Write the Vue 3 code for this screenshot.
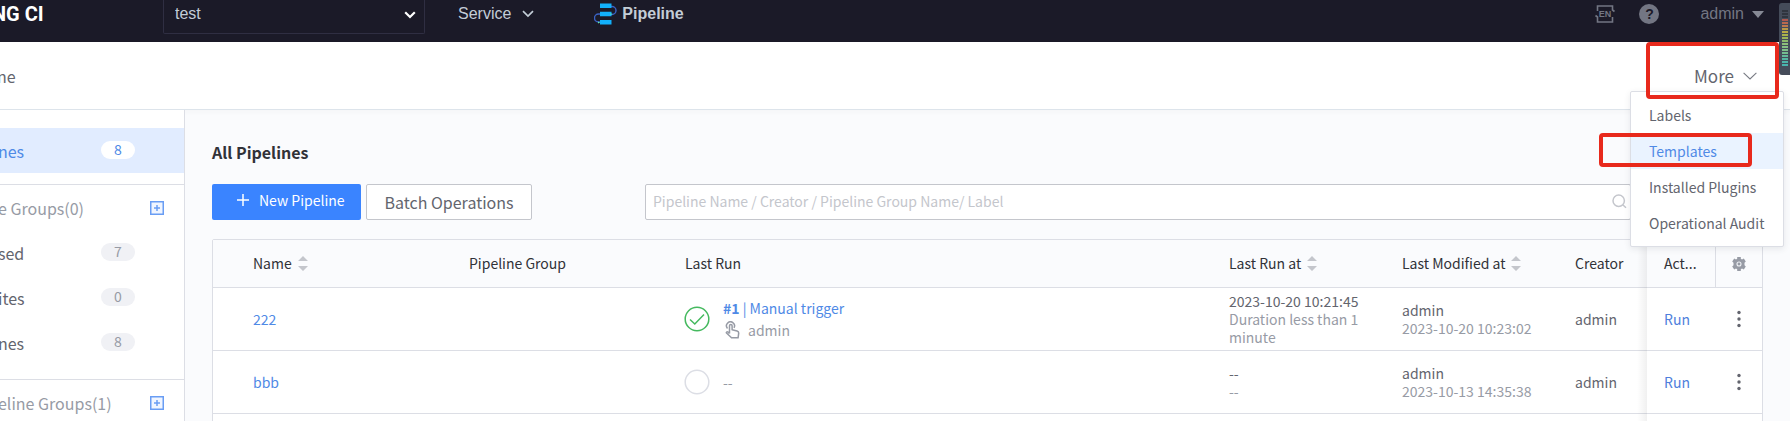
<script setup>
import { ref } from 'vue'

const project = ref('test')
const keyword = ref('')

const menu = ['Labels', 'Templates', 'Installed Plugins', 'Operational Audit']
const activeMenu = 'Templates'

const groups = [
  {
    title: 'e Groups(0)',
    items: [
      { label: 'sed', count: 7 },
      { label: 'ites', count: 0 },
      { label: 'nes', count: 8 },
    ],
  },
  { title: 'eline Groups(1)', items: [] },
]

const columns = [
  { key: 'name', label: 'Name', sortable: true },
  { key: 'group', label: 'Pipeline Group' },
  { key: 'run', label: 'Last Run' },
  { key: 'runAt', label: 'Last Run at', sortable: true },
  { key: 'modified', label: 'Last Modified at', sortable: true },
  { key: 'creator', label: 'Creator' },
]

const rows = [
  {
    name: '222', done: true, build: '#1', trigger: 'Manual trigger', runner: 'admin',
    runAt: '2023-10-20 10:21:45', duration: 'Duration less than 1 minute',
    editor: 'admin', editedAt: '2023-10-20 10:23:02', creator: 'admin',
  },
  {
    name: 'bbb', done: false, runAt: '--', duration: '--',
    editor: 'admin', editedAt: '2023-10-13 14:35:38', creator: 'admin',
  },
]

const levels = [
  '#30353f', '#30353f', '#30353f', '#b0584e', '#b9694f', '#bd7a4d', '#b99a48', '#b8ab45',
  '#a9b34a', '#9bb758', '#8cba6b', '#8cc07a', '#86c084', '#7fc08a', '#74bd90', '#63b99a',
  '#55b7a3', '#4db5a9', '#48b4ad',
]
</script>

<template>
  <div class="page">
    <header class="topbar">
      <span class="brand">NG CI</span>
      <div class="project">
        <select v-model="project" aria-label="Project">
          <option>test</option>
        </select>
        <svg width="12" height="8" viewBox="0 0 12 8"><path d="M1.2 1.2 6 6l4.800-4.800" fill="none" stroke="#fff" stroke-width="2.200" /></svg>
      </div>
      <button class="service" type="button">
        Service
        <svg width="12" height="8" viewBox="0 0 12 8"><path d="M1 1.200 6 6l5-4.800" fill="none" stroke="#c3cdd7" stroke-width="1.700" /></svg>
      </button>
      <a class="product" href="#">
        <svg width="23" height="22" viewBox="0 0 23 22">
          <path d="M16 3.500h2a3.700 3.700 0 0 1 0 8h-1M6 11H4.500a3.900 3.900 0 0 0 0 8H6" fill="none" stroke="#3a62c4" stroke-width="1.400" />
          <path d="M6 .5h11.500v4.500H6zM6 8.800h11.500v4.500H6zM6 17h11.500v4.500H6z" fill="#12b0fb" />
          <path d="M16.500 10.200l2 .9-2 1zM4 18.500l2 .9-2 1z" fill="#5df0a8" />
        </svg>
        Pipeline
      </a>
      <div class="tools">
        <button class="tool" type="button" aria-label="Language">
          <svg width="20" height="18" viewBox="0 0 20 18">
            <path d="M2.500 6V1h15v4l2 1.500M17.500 12v5h-15v-5L.5 10.500" fill="none" stroke="#737683" stroke-width="1.600" />
            <text x="10" y="12" text-anchor="middle" class="lang">EN</text>
          </svg>
        </button>
        <button class="help" type="button">?</button>
        <button class="user" type="button">
          admin
          <svg width="12" height="7" viewBox="0 0 12 7"><path d="M0 0h12L6 7z" fill="#868995" /></svg>
        </button>
      </div>
    </header>

    <nav class="subbar">
      <a class="crumb" href="#">ne</a>
      <div class="more">
        <button class="more-button" type="button">
          More
          <svg width="14" height="8" viewBox="0 0 14 8"><path d="M.6.8 7 7 13.400.8" fill="none" stroke="#777a83" stroke-width="1.100" /></svg>
        </button>
        <ul class="menu">
          <li v-for="item in menu" :key="item">
            <a href="#" :class="{ active: item === activeMenu }">{{ item }}</a>
          </li>
        </ul>
        <span class="mark mark-more"></span>
        <span class="mark mark-templates"></span>
      </div>
    </nav>

    <div class="body">
      <aside class="sidebar">
        <a class="entry active" href="#"><span class="label">nes</span><span class="count">8</span></a>
        <section v-for="group in groups" :key="group.title" class="group">
          <h3>
            <span class="label">{{ group.title }}</span>
            <button type="button" aria-label="Add group">
              <svg width="14" height="14" viewBox="0 0 14 14"><path d="M.75.75h12.500v12.500H.75zM7 4v6M4 7h6" fill="#f0f5ff" stroke="#699df4" stroke-width="1.500" /></svg>
            </button>
          </h3>
          <a v-for="item in group.items" :key="item.label" class="entry" href="#">
            <span class="label">{{ item.label }}</span><span class="count">{{ item.count }}</span>
          </a>
        </section>
      </aside>

      <main class="main">
        <h1>All Pipelines</h1>
        <div class="actions">
          <button class="primary" type="button">
            <svg width="12" height="12" viewBox="0 0 12 12"><path d="M6 0v12M0 6h12" stroke="#fff" stroke-width="1.500" /></svg>
            New Pipeline
          </button>
          <button class="plain" type="button">Batch Operations</button>
          <div class="search">
            <input v-model="keyword" type="text" aria-label="Search pipelines" placeholder="Pipeline Name / Creator / Pipeline Group Name/ Label">
            <svg width="15" height="15" viewBox="0 0 15 15"><path d="M11 11l3 2.800M6.700 1a5.700 5.700 0 1 1 0 11.400A5.700 5.700 0 0 1 6.700 1z" fill="none" stroke="#c4c6cc" stroke-width="1.500" /></svg>
          </div>
        </div>

        <div class="table-wrap">
          <table>
            <colgroup>
              <col class="c-pad"><col class="c-wide"><col class="c-wide"><col><col class="c-date"><col class="c-date"><col class="c-creator"><col class="c-act"><col class="c-set">
            </colgroup>
            <thead>
              <tr>
                <th></th>
                <th v-for="col in columns" :key="col.key">
                  <span class="head">{{ col.label }}
                    <svg v-if="col.sortable" width="10" height="16" viewBox="0 0 10 16"><path d="M0 6h10L5 1zM0 11h10l-5 5z" fill="#c4c6cc" /></svg>
                  </span>
                </th>
                <th class="fixed">Act...</th>
                <th class="setting">
                  <button type="button" aria-label="Table settings">
                    <svg width="14" height="14" viewBox="0 0 14 14">
                      <path d="M5.200 0h3.600v1.700l1.200.7 1.800-.8 2 3-1.300 1.100v2.600l1.300 1.100-2 3-1.800-.8-1.200.7V14H5.200v-1.700L4 11.600l-1.800.8-2-3 1.300-1.100V5.700L.2 4.600l2-3 1.800.8 1.200-.7z" fill="#979ba5" />
                      <circle cx="7" cy="7" r="2" fill="#979ba5" stroke="#eef0f4" stroke-width="1.100" />
                    </svg>
                  </button>
                </th>
              </tr>
            </thead>
            <tbody>
              <tr v-for="row in rows" :key="row.name">
                <td></td>
                <td><a href="#">{{ row.name }}</a></td>
                <td></td>
                <td>
                  <div class="run">
                    <svg width="26" height="26" viewBox="0 0 26 26">
                      <circle cx="13" cy="13" r="11.800" fill="none" :stroke="row.done ? '#45b95f' : '#dcdee5'" stroke-width="1.500" />
                      <path v-if="row.done" d="M6 13.500l4.800 4.500L20 8.500" fill="none" stroke="#45b95f" stroke-width="1.500" />
                    </svg>
                    <div v-if="row.done" class="run-info">
                      <a href="#"><b>{{ row.build }}</b> | {{ row.trigger }}</a>
                      <span class="runner">
                        <svg width="15" height="18" viewBox="0 0 15 18"><path d="M2.500 7.500A4 4 0 1 1 9 6.800M4.500 12.500V4.800a1.300 1.300 0 0 1 2.600 0v4l5 1.200c1.200.3 1.700 1 1.600 2.200l-.6 4.600H6.500L1.500 12c-.6-.7.500-1.700 1.500-1l1.500 1.500" fill="none" stroke="#979ba5" stroke-width="1.500" stroke-linejoin="round" /></svg>
                        {{ row.runner }}
                      </span>
                    </div>
                    <span v-else class="muted">--</span>
                  </div>
                </td>
                <td>{{ row.runAt }}<p>{{ row.duration }}</p></td>
                <td>{{ row.editor }}<p>{{ row.editedAt }}</p></td>
                <td>{{ row.creator }}</td>
                <td class="fixed"><a class="go" href="#">Run</a></td>
                <td class="ops">
                  <button type="button" aria-label="More actions">
                    <svg width="4" height="18" viewBox="0 0 4 18"><circle cx="2" cy="2.500" r="1.700" /><circle cx="2" cy="9" r="1.700" /><circle cx="2" cy="15.500" r="1.700" /></svg>
                  </button>
                </td>
              </tr>
              <tr><td colspan="7"></td><td class="fixed"></td><td></td></tr>
            </tbody>
          </table>
        </div>
      </main>
    </div>

    <div class="meter">
      <i v-for="(color, i) in levels" :key="i" :style="{ background: color }"></i>
    </div>
  </div>
</template>

<style>
body { margin: 0; }
</style>

<style scoped>
* { box-sizing: border-box; }
.page {
  position: relative;
  display: flex;
  flex-direction: column;
  height: 100vh;
  overflow: hidden;
  background: #fafbfd;
  color: #63656e;
  font: 14px/18px "Noto Sans CJK SC", sans-serif;
}
a { color: #4f8ae6; text-decoration: none; }
button { padding: 0; border: 0; background: none; color: inherit; font: inherit; cursor: pointer; }
svg { display: block; flex: none; }
h1, h3, p, ul { margin: 0; padding: 0; }
ul { list-style: none; }

.topbar {
  display: flex;
  flex: none;
  align-items: center;
  height: 42px;
  padding: 0 26px 14px 0;
  background: #1b1a28;
  color: #c3cdd7;
  font-family: "Liberation Sans", Arial, sans-serif;
  font-size: 16px;
}
.brand { width: 171px; margin-left: -8px; color: #fff; font: bold 20px/24px Roboto, sans-serif; }
.project { position: relative; align-self: flex-start; width: 262px; }
.project select {
  width: 100%;
  height: 34px;
  padding: 0 11px 6px;
  border: 1px solid #2f2e42;
  border-top: 0;
  border-radius: 0 0 2px 2px;
  background: transparent;
  color: #c3cdd7;
  font: inherit;
  appearance: none;
}
.project svg { position: absolute; right: 9px; top: 11px; pointer-events: none; }
.service { display: flex; align-items: center; gap: 11px; margin-left: 33px; }
.product { display: flex; align-items: center; gap: 5px; margin-left: 60px; color: #c3cdd7; font-weight: bold; }
.tools { display: flex; align-items: center; margin-left: auto; }
.lang { fill: #737683; font: bold 9px "Liberation Sans", sans-serif; }
.help {
  width: 20px;
  height: 20px;
  margin-left: 24px;
  border-radius: 50%;
  background: #737683;
  color: #1b1a28;
  font: bold 14px/20px "Liberation Sans", sans-serif;
}
.user { display: flex; align-items: center; gap: 8px; margin-left: 41px; color: #737683; }

.subbar {
  display: flex;
  flex: none;
  align-items: center;
  justify-content: space-between;
  height: 68px;
  padding-right: 6px;
  border-bottom: 1px solid #dde4eb;
  background: #fff;
  box-shadow: 0 2px 5px rgba(51, 60, 72, 0.03);
  font-size: 16px;
}
.crumb { margin-left: -3px; color: #63656e; }
.more { position: relative; z-index: 2; width: 154px; }
.more-button { display: flex; align-items: center; gap: 9px; margin-left: auto; margin-right: 27px; font-size: 17px; }
.menu {
  position: absolute;
  top: 24px;
  left: 0;
  width: 100%;
  padding: 5px 0;
  border: 1px solid #dcdee5;
  border-radius: 2px;
  background: #fff;
  box-shadow: 0 2px 6px rgba(51, 60, 72, 0.1);
  font-size: 14px;
}
.menu a { display: block; padding: 0 0 0 18px; color: #63656e; line-height: 36px; white-space: nowrap; }
.menu a.active { background: #eaf3ff; color: #4f8ae6; }
.mark { position: absolute; border: 4px solid #e8291c; border-radius: 4px; pointer-events: none; }
.mark-more { top: -25px; left: 16px; width: 133px; height: 57px; }
.mark-templates { top: 66px; left: -31px; width: 153px; height: 34px; }

.body { display: flex; flex: 1; min-height: 0; }
.sidebar { flex: none; width: 185px; padding-top: 18px; border-right: 1px solid #dcdee5; background: #fff; font-size: 16px; overflow: hidden; }
.entry { display: flex; align-items: center; height: 45px; color: #63656e; }
.entry.active { margin-bottom: 11px; background: #e1ecff; color: #4f8ae6; }
.label { flex: none; width: 103px; margin-left: -2px; white-space: nowrap; }
.count { width: 34px; height: 18px; margin-bottom: 2px; border-radius: 9px; background: #f0f1f5; color: #979ba5; font-size: 14px; line-height: 17px; text-align: center; }
.active .count { background: #fff; color: #4f8ae6; }
.group { padding-bottom: 14px; border-top: 1px solid #dcdee5; }
.group h3 { display: flex; align-items: center; justify-content: space-between; height: 45px; padding-right: 20px; color: #979ba5; font-size: 16px; font-weight: normal; }

.main { flex: 1; min-width: 0; padding: 30px 27px 0; }
h1 { color: #313238; font-size: 16px; font-weight: bold; line-height: 24px; }
.actions { display: flex; gap: 5px; margin-top: 20px; padding-right: 132px; }
.primary, .plain { height: 36px; border-radius: 2px; }
.primary { display: flex; align-items: center; gap: 10px; width: 149px; padding: 0 0 4px 25px; background: #3a84ff; color: #fff; }
.plain { width: 166px; border: 1px solid #c4c6cc; background: #fff; font-size: 16px; }
.search { position: relative; flex: 1; margin-left: 108px; }
.search input { width: 100%; height: 36px; padding: 0 30px 3px 7px; border: 1px solid #c4c6cc; border-radius: 2px; background: #fff; color: #63656e; font: inherit; }
.search input::placeholder { color: #c4c6cc; opacity: 1; }
.search svg { position: absolute; top: 10px; right: 4px; }

.table-wrap { margin-top: 19px; border: 1px solid #dcdee5; border-radius: 2px; background: #fff; }
table { width: 100%; border-spacing: 0; table-layout: fixed; }
.c-pad { width: 25px; }
.c-wide { width: 216px; }
.c-date { width: 173px; }
.c-creator { width: 87px; }
.c-act { width: 68px; }
.c-set { width: 47px; }
th, td { padding: 0 15px; border-bottom: 1px solid #dcdee5; text-align: left; }
th { height: 48px; padding-bottom: 2px; background: #fafbfd; color: #313238; font-weight: normal; }
td { height: 63px; }
.head { display: flex; align-items: center; gap: 6px; white-space: nowrap; }
.fixed { position: relative; padding-left: 17px; padding-right: 0; }
.fixed::before {
  content: "";
  position: absolute;
  top: 0;
  bottom: -1px;
  left: -10px;
  width: 10px;
  background: linear-gradient(to right, rgba(0, 0, 0, 0), rgba(0, 0, 0, 0.06));
}
.setting { padding: 0; border-left: 1px solid #dcdee5; }
.setting button, .ops button { display: block; margin: 0 auto; }
.ops { padding: 0; fill: #63656e; }
.go { color: #4f7fdc; }
td p, .muted { color: #979ba5; }
.run { display: flex; align-items: center; gap: 13px; margin-left: -1px; }
.run-info { display: flex; flex-direction: column; gap: 4px; }
.runner { display: flex; align-items: center; gap: 8px; padding-left: 2px; color: #979ba5; }

.meter {
  position: absolute;
  top: 3px;
  right: 0;
  z-index: 3;
  display: flex;
  flex-direction: column;
  gap: 1px;
  width: 11px;
  height: 72px;
  padding: 7px 2px 0 3px;
  border-radius: 3px 0 0 3px;
  background: #454c5a;
}
.meter i { height: 2px; }
</style>
